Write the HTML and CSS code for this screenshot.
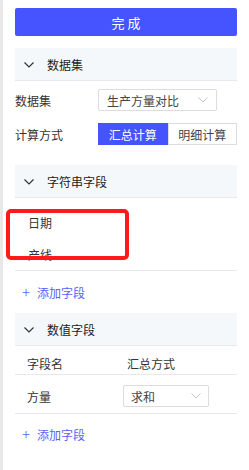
FILE: index.html
```html
<!DOCTYPE html>
<html lang="zh">
<head>
<meta charset="utf-8">
<link rel="stylesheet" href="styles.css">
</head>
<body>
<div class="panel">
  <button class="done">完成</button>

  <div class="section-head">
    <svg class="chev" width="10" height="6" viewBox="0 0 10 6"><path d="M0.5 0.5 L5 5 L9.5 0.5" fill="none" stroke="#333" stroke-width="1.2"/></svg>
    <span>数据集</span>
  </div>
  <div class="form">
    <div class="form-row">
      <span class="label">数据集</span>
      <div class="select wide"><span>生产方量对比</span>
        <svg width="10" height="6" viewBox="0 0 10 6"><path d="M0.5 0.5 L5 5 L9.5 0.5" fill="none" stroke="#c4c4c4" stroke-width="1"/></svg>
      </div>
    </div>
    <div class="form-row">
      <span class="label">计算方式</span>
      <div class="seg">
        <span class="seg-item active">汇总计算</span>
        <span class="seg-item">明细计算</span>
      </div>
    </div>
  </div>

  <div class="section-head">
    <svg class="chev" width="10" height="6" viewBox="0 0 10 6"><path d="M0.5 0.5 L5 5 L9.5 0.5" fill="none" stroke="#333" stroke-width="1.2"/></svg>
    <span>字符串字段</span>
  </div>
  <div class="field-list">
    <div class="field">日期</div>
    <div class="field">产线</div>
    <div class="highlight"></div>
  </div>
  <div class="add"><span class="plus">+</span>添加字段</div>

  <div class="section-head after-add">
    <svg class="chev" width="10" height="6" viewBox="0 0 10 6"><path d="M0.5 0.5 L5 5 L9.5 0.5" fill="none" stroke="#333" stroke-width="1.2"/></svg>
    <span>数值字段</span>
  </div>
  <div class="table-head">
    <span class="col1">字段名</span>
    <span>汇总方式</span>
  </div>
  <div class="table-row">
    <span class="col1">方量</span>
    <div class="select small"><span>求和</span>
      <svg width="10" height="6" viewBox="0 0 10 6"><path d="M0.5 0.5 L5 5 L9.5 0.5" fill="none" stroke="#c4c4c4" stroke-width="1"/></svg>
    </div>
  </div>
  <div class="add add2"><span class="plus">+</span>添加字段</div>
</div>
</body>
</html>
```
FILE: styles.css
```css
* { box-sizing: border-box; }
html, body { margin: 0; padding: 0; background: #fff; }
body {
  font-family: "Noto Sans CJK SC", "Noto Sans", sans-serif;
  font-size: 12px;
  color: #333;
}
.panel {
  width: 249px;
  min-height: 470px;
  border-left: 3px solid #e8e8e8;
  padding: 8px 12px 0 12px;
}
.done {
  display: block;
  width: 222px;
  height: 28px;
  margin: 0;
  border: none;
  border-radius: 2px;
  background: #4654ff;
  color: #fff;
  font-family: inherit;
  font-size: 13px;
  letter-spacing: 3px;
  text-indent: 3px;
  padding: 0;
}
.section-head {
  height: 33px;
  margin-top: 12px;
  background: #f5f8fb;
  border-bottom: 1px solid #e6e9ee;
  display: flex;
  align-items: center;
  padding-left: 9px;
  gap: 13px;
  color: #222;
  font-size: 12px;
}
.section-head.after-add { margin-top: 0; }
.section-head .chev { margin-top: 1px; }
.form {
  padding-top: 8px;
  padding-bottom: 8px;
  display: flex;
  flex-direction: column;
  gap: 12px;
}
.form-row {
  display: flex;
  align-items: center;
  height: 22px;
}
.label { width: 83px; color: #333; }
.select {
  height: 22px;
  border: 1px solid #dcdcdc;
  border-radius: 2px;
  display: flex;
  align-items: center;
  justify-content: space-between;
  padding: 0 8px 0 8px;
  color: #444;
}
.select.wide { width: 119px; }
.select.small { width: 86px; padding-left: 7px; padding-right: 7px; }
.seg { display: flex; width: 139px; height: 22px; }
.seg-item {
  flex: 1;
  display: flex;
  align-items: center;
  justify-content: center;
  border: 1px solid #dcdcdc;
  color: #444;
}
.seg-item.active {
  background: #4654ff;
  border-color: #4654ff;
  color: #fff;
}
.field-list {
  position: relative;
  padding-top: 8px;
  border-bottom: 1px solid #e8e8e8;
}
.field {
  height: 32px;
  display: flex;
  align-items: center;
  padding-left: 13px;
  color: #333;
}
.highlight {
  position: absolute;
  left: -9px;
  top: 11px;
  width: 123px;
  height: 51px;
  border: 4px solid #ff1a1a;
  border-radius: 5px;
}
.add {
  height: 42px;
  display: flex;
  align-items: center;
  padding-left: 7px;
  color: #5a61ff;
}
.add .plus {
  font-size: 15px;
  width: 15px;
  font-weight: 300;
  line-height: 1;
  margin-top: -1px;
}
.table-head {
  height: 29px;
  display: flex;
  align-items: flex-end;
  padding: 0 0 2px 12px;
  border-bottom: 1px solid #e8e8e8;
}
.col1 { width: 100px; }
.table-row {
  height: 39px;
  display: flex;
  align-items: center;
  padding: 4px 0 0 12px;
  border-bottom: 1px solid #e8e8e8;
}
.table-row .col1 { width: 96px; }
.add2 { height: 40px; }
```
